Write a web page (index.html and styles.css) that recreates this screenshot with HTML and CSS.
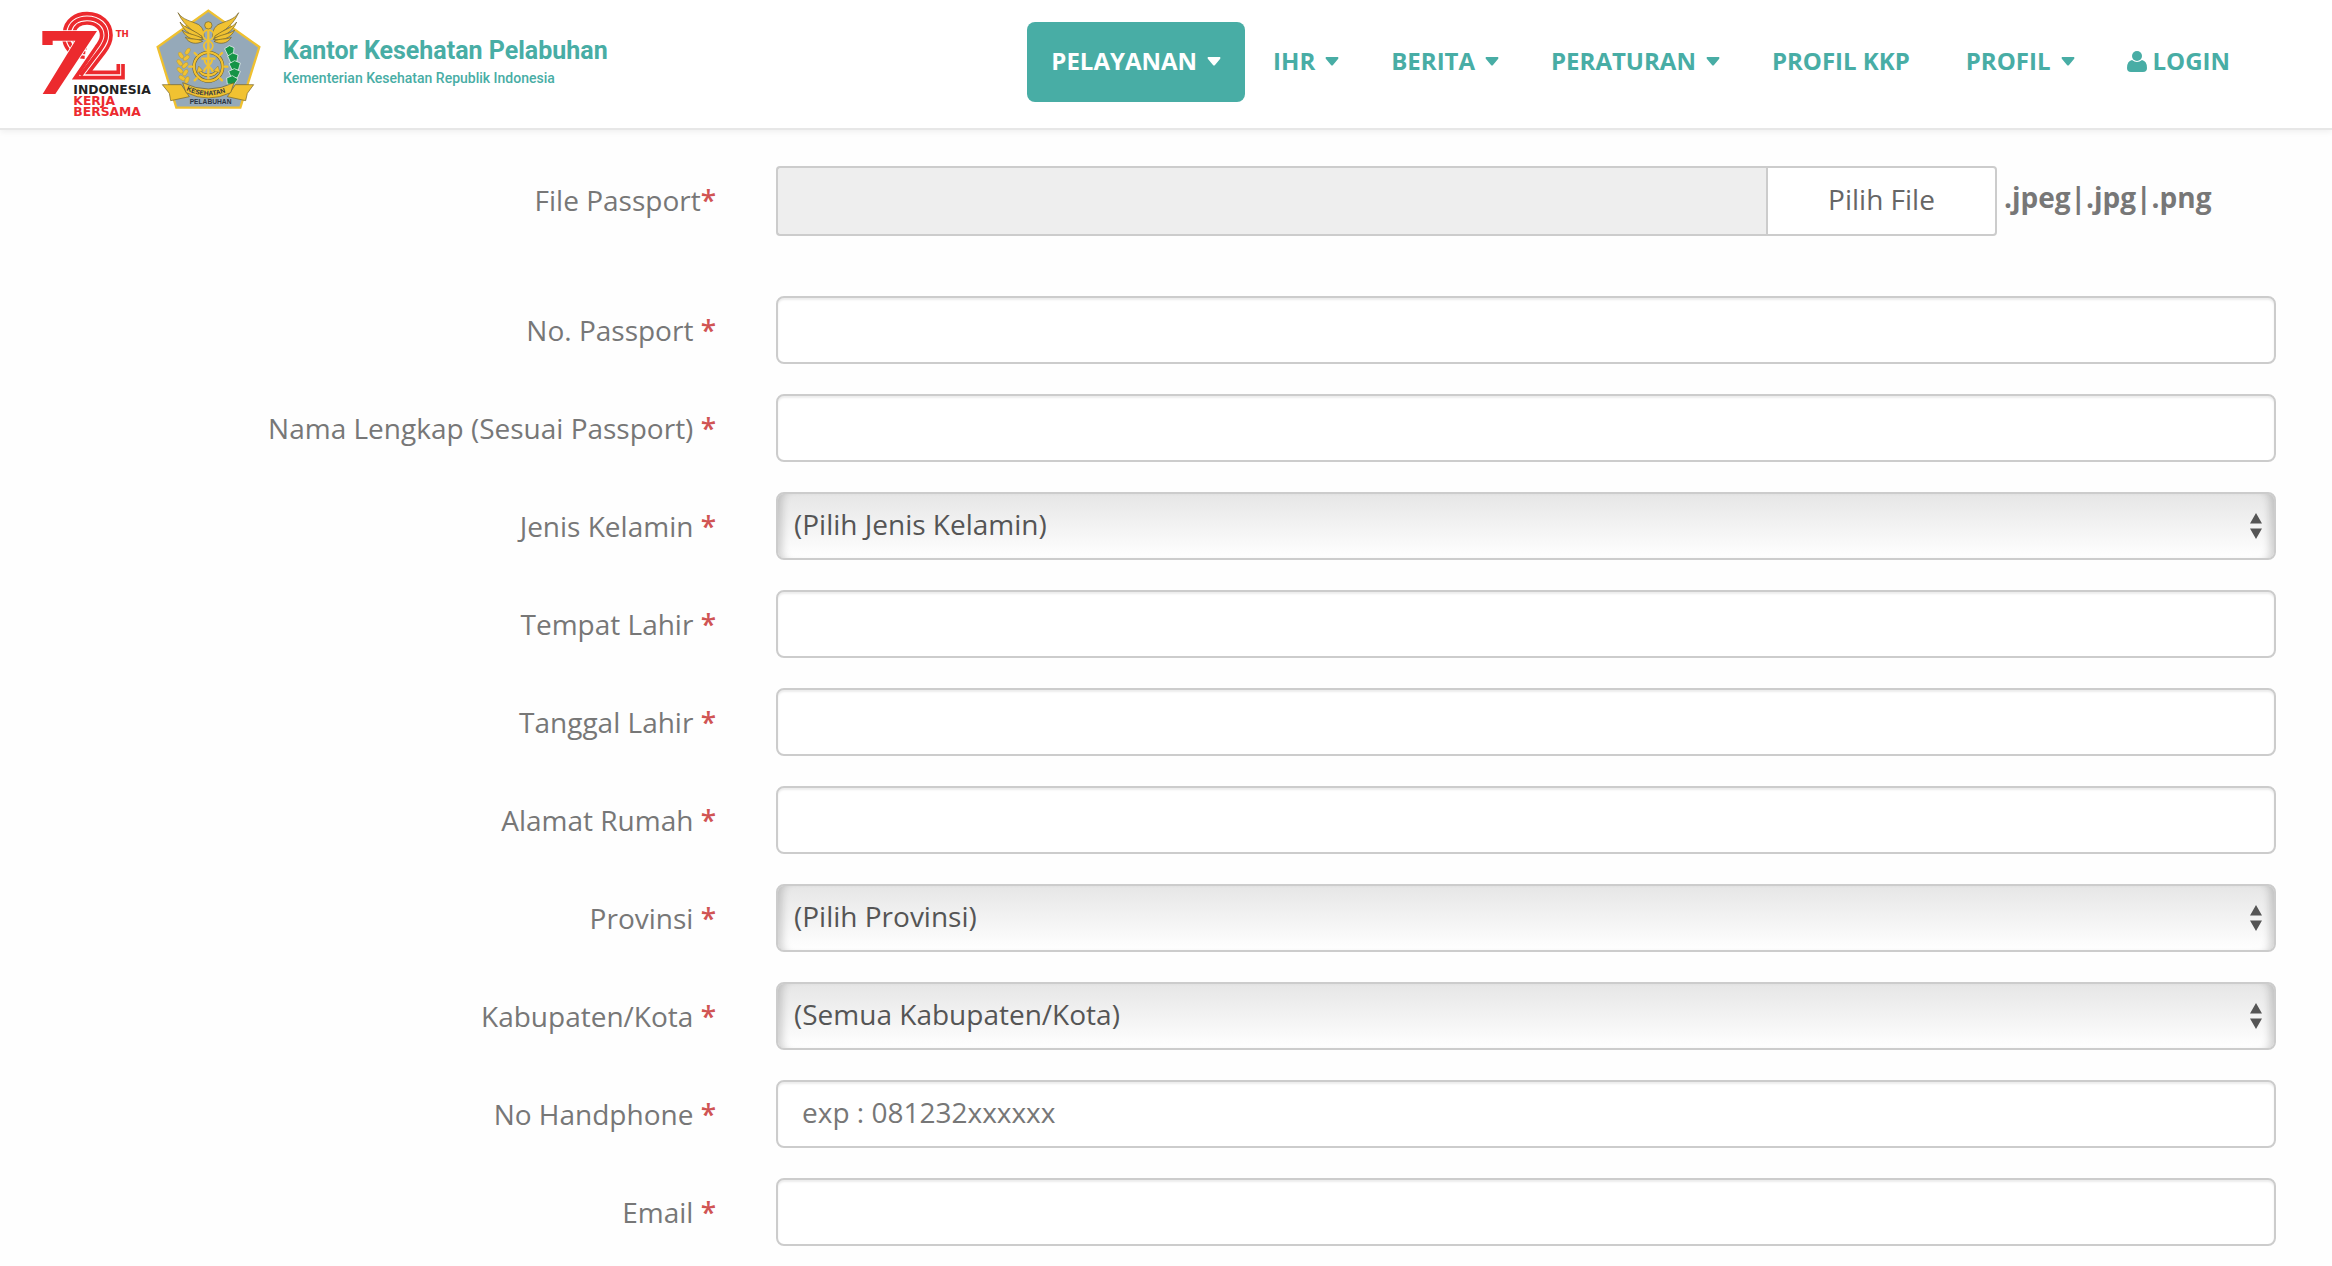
FILE: index.html
```
<!DOCTYPE html>
<html lang="id">
    <head>
        <meta charset="utf-8">
        <title>Kantor Kesehatan Pelabuhan</title>
        <link rel="stylesheet" href="styles.css">
    </head>
    <body>
        <header class="navbar">
            <a class="brand" href="#">
                <svg class="logo-72" viewBox="12 12 342 324">
                    <g fill="none" stroke="#ec2a2e" stroke-width="11">
                        <path d="M86 78 C88 44 118 23 153 23 C196 23 225 50 225 88 C225 110 216 124 205 138 L158 199 H247 V174"/>
                        <path d="M100 78 C103 52 124 37 153 37 C188 37 211 59 211 88 C211 106 202 118 193 130 L134 208"/>
                        <path d="M114 78 C118 60 132 51 153 51 C180 51 197 68 197 88 C197 102 189 113 181 123 L118 215 H261 V174"/>
                        <path d="M84 104 C90 132 112 152 146 154 M98 104 C104 124 120 138 148 140 M112 100 C118 116 128 124 152 126" stroke-width="10"/>
                    </g>
                    <path fill="#ec2a2e" stroke="#fff" stroke-width="5" paint-order="stroke" d="M19 75 H183 L58 264 H20 L118 104 H50 V117 H19 Z"/>
                    <text class="logo-th" x="239" y="93">TH</text>
                    <text class="logo-word dark" x="112" y="264">INDONESIA</text>
                    <text class="logo-word" x="112" y="297">KERJA</text>
                    <text class="logo-word" x="112" y="329">BERSAMA</text>
                </svg>
                <svg class="logo-kkp" viewBox="6 12 324 312">
                    <path d="M169 20 L322 129 L265 311 H73 L17 129 Z" fill="#95a9b9" stroke="#efc02f" stroke-width="7"/>
                    <!-- sayap -->
                    <g id="wing" fill="#f1c232" stroke="#6f5f25" stroke-width="2">
                        <path d="M78 26 C92 48 116 50 140 62 C154 72 156 84 156 100 C138 90 98 72 78 26 Z"/>
                        <path d="M84 54 C98 74 132 78 154 102 C126 98 96 86 84 54 Z"/>
                        <path d="M90 78 C106 92 134 90 154 106 C128 110 102 104 90 78 Z"/>
                        <path d="M100 100 C118 108 134 102 152 112 C134 122 112 120 100 100 Z"/>
                    </g>
                    <use href="#wing" transform="matrix(-1 0 0 1 338 0)"/>
                    <!-- roda kemudi dan jangkar -->
                    <g fill="none" stroke="#6f5f25" stroke-width="10">
                        <circle cx="169" cy="188" r="43"/>
                        <path d="M142 196 C146 220 192 220 196 196"/>
                    </g>
                    <g fill="none" stroke="#f1c232" stroke-width="7">
                        <circle cx="169" cy="188" r="43"/>
                        <path stroke-linecap="round" d="M169 139V130 M204 153l6-6 M218 188h8 M204 223l6 6 M134 153l-6-6 M120 188h-8 M134 223l-6 6"/>
                        <path d="M141 196 C146 220 192 220 197 196 M148 164 H190"/>
                        <path d="M169 76 V226"/>
                        <path d="M169 76 C144 84 150 104 169 110 C190 118 184 136 169 142 M169 76 C194 84 188 104 169 110 C148 118 154 136 169 142" stroke-width="5"/>
                        <path d="M158 168 C158 186 182 188 182 204 M180 168 C180 186 156 188 156 204" stroke-width="6"/>
                    </g>
                    <path fill="#f1c232" stroke="#6f5f25" d="M134 206 L140 186 L153 200 Z M204 206 L198 186 L185 200 Z"/>
                    <circle cx="169" cy="64" r="11" fill="#f1c232" stroke="#6f5f25" stroke-width="2"/>
                    <!-- padi -->
                    <g fill="#f1c232" stroke="#a18a35">
                        <ellipse cx="107" cy="142" rx="6" ry="11" transform="rotate(35 107 142)"/>
                        <ellipse cx="87" cy="154" rx="6" ry="11" transform="rotate(-35 87 154)"/>
                        <ellipse cx="103" cy="162" rx="6" ry="11" transform="rotate(50 103 162)"/>
                        <ellipse cx="83" cy="176" rx="6" ry="11" transform="rotate(-40 83 176)"/>
                        <ellipse cx="99" cy="184" rx="6" ry="11" transform="rotate(45 99 184)"/>
                        <ellipse cx="84" cy="199" rx="6" ry="11" transform="rotate(-45 84 199)"/>
                        <ellipse cx="100" cy="206" rx="6" ry="11" transform="rotate(35 100 206)"/>
                        <ellipse cx="90" cy="222" rx="6" ry="11" transform="rotate(-55 90 222)"/>
                        <ellipse cx="105" cy="228" rx="6" ry="11" transform="rotate(20 105 228)"/>
                    </g>
                    <!-- kapas -->
                    <g fill="#159447" stroke="#fff" stroke-width="2">
                        <path d="M218 134 l14-9 l14 6 l-2 22 l-16 2 Z"/>
                        <path d="M227 156 l15-9 l16 6 l-4 21 l-18 2 Z"/>
                        <path d="M231 179 l17-9 l17 7 l-6 21 l-18 1 Z"/>
                        <path d="M230 202 l17-8 l18 8 l-9 20 l-18-1 Z"/>
                        <path d="M224 222 l17-7 l17 10 l-12 17 l-20-2 Z"/>
                    </g>
                    <!-- pita -->
                    <g fill="#f1c232" stroke="#6f5f25" stroke-width="2">
                        <path d="M31 242 H88 L112 278 L56 290 L52 268 Z"/>
                        <path d="M305 242 H250 L226 278 L281 290 L286 268 Z"/>
                        <path d="M92 236 Q169 274 246 236 L236 266 Q169 298 102 266 Z"/>
                    </g>
                    <path id="pita" fill="none" d="M101 258 Q169 292 242 256"/>
                    <text class="kkp-word"><textPath href="#pita" startOffset="2">KESEHATAN</textPath></text>
                    <text class="kkp-word" x="113" y="300">PELABUHAN</text>
                </svg>
                <span class="brand-text">
                    <strong class="brand-name">Kantor Kesehatan Pelabuhan</strong>
                    <span class="brand-sub">Kementerian Kesehatan Republik Indonesia</span>
                </span>
            </a>
            <nav class="menu">
                <a class="menu-item active" href="#">PELAYANAN <svg class="caret" viewBox="0 0 14 9"><path d="M1 0h12q1 1 0 2l-5 6q-1 1-2 0l-5-6q-1-1 0-2z"/></svg></a>
                <a class="menu-item" href="#">IHR <svg class="caret" viewBox="0 0 14 9"><path d="M1 0h12q1 1 0 2l-5 6q-1 1-2 0l-5-6q-1-1 0-2z"/></svg></a>
                <a class="menu-item" href="#">BERITA <svg class="caret" viewBox="0 0 14 9"><path d="M1 0h12q1 1 0 2l-5 6q-1 1-2 0l-5-6q-1-1 0-2z"/></svg></a>
                <a class="menu-item" href="#">PERATURAN <svg class="caret" viewBox="0 0 14 9"><path d="M1 0h12q1 1 0 2l-5 6q-1 1-2 0l-5-6q-1-1 0-2z"/></svg></a>
                <a class="menu-item plain" href="#">PROFIL KKP</a>
                <a class="menu-item" href="#">PROFIL <svg class="caret" viewBox="0 0 14 9"><path d="M1 0h12q1 1 0 2l-5 6q-1 1-2 0l-5-6q-1-1 0-2z"/></svg></a>
                <a class="menu-item login" href="#"><svg class="user" viewBox="0 0 20 21"><ellipse cx="10" cy="5" rx="5" ry="5"/><path d="M5 9q5 4 10 0q5 1 5 8q0 4-4 4H4q-4 0-4-4q0-7 5-8z"/></svg>LOGIN</a>
            </nav>
        </header>
        <form class="form">
            <div class="row row-file">
                <label for="file">File Passport<span class="req">*</span></label>
                <div class="file">
                    <input class="file-name" type="text" id="file" readonly>
                    <button class="file-btn" type="button">Pilih File</button>
                    <b class="file-ext">.jpeg|.jpg|.png</b>
                </div>
            </div>
            <div class="row">
                <label for="passport">No. Passport <span class="req">*</span></label>
                <input class="control" type="text" id="passport">
            </div>
            <div class="row">
                <label for="nama">Nama Lengkap (Sesuai Passport) <span class="req">*</span></label>
                <input class="control" type="text" id="nama">
            </div>
            <div class="row">
                <label for="kelamin">Jenis Kelamin <span class="req">*</span></label>
                <select class="control select" id="kelamin"><option>(Pilih Jenis Kelamin)</option></select>
            </div>
            <div class="row">
                <label for="tempat">Tempat Lahir <span class="req">*</span></label>
                <input class="control" type="text" id="tempat">
            </div>
            <div class="row">
                <label for="tanggal">Tanggal Lahir <span class="req">*</span></label>
                <input class="control" type="text" id="tanggal">
            </div>
            <div class="row">
                <label for="alamat">Alamat Rumah <span class="req">*</span></label>
                <input class="control" type="text" id="alamat">
            </div>
            <div class="row">
                <label for="provinsi">Provinsi <span class="req">*</span></label>
                <select class="control select" id="provinsi"><option>(Pilih Provinsi)</option></select>
            </div>
            <div class="row">
                <label for="kota">Kabupaten/Kota <span class="req">*</span></label>
                <select class="control select" id="kota"><option>(Semua Kabupaten/Kota)</option></select>
            </div>
            <div class="row">
                <label for="hp">No Handphone <span class="req">*</span></label>
                <input class="control" type="tel" id="hp" placeholder="exp : 081232xxxxxx">
            </div>
            <div class="row">
                <label for="email">Email <span class="req">*</span></label>
                <input class="control" type="email" id="email">
            </div>
        </form>
    </body>
</html>
```

FILE: styles.css
```
* {
    box-sizing: border-box;
}
body {
    margin: 0;
    background-color: #fefefe;
    color: #777;
    font-family: "Open Sans", sans-serif;
    font-size: 28px;
    line-height: 40px;
}
a {
    color: #48ada5;
    text-decoration: none;
}
.navbar {
    display: flex;
    justify-content: space-between;
    align-items: flex-start;
    height: 130px;
    padding: 0 78px 0 40px;
    background-color: #fff;
    border-bottom: 2px solid #e7e7e7;
    box-shadow: 0 2px 6px rgba(0, 0, 0, 0.06);
}
.brand {
    display: flex;
    padding-top: 8px;
}
.logo-72 {
    width: 114px;
    height: 108px;
    margin-top: 2px;
}
.logo-kkp {
    width: 108px;
    height: 104px;
}
.logo-th {
    font: bold 26px "DejaVu Sans", sans-serif;
    fill: #ec2a2e;
}
.logo-word {
    font: bold 37px "DejaVu Sans", sans-serif;
    fill: #ec2a2e;
}
.dark {
    fill: #222;
}
.kkp-word {
    font: bold 20px "Liberation Sans", sans-serif;
    fill: #2b3440;
}
.brand-text {
    display: flex;
    flex-direction: column;
    padding: 27px 0 0 21px;
    font-family: Roboto, sans-serif;
    white-space: nowrap;
}
.brand-name {
    font-size: 25px;
    line-height: 32px;
}
.brand-sub {
    font-size: 14px;
    font-weight: 500;
    line-height: 22px;
}
.menu {
    display: flex;
    gap: 4px;
    padding-top: 22px;
}
.menu-item {
    display: flex;
    align-items: center;
    gap: 10px;
    height: 80px;
    padding: 0 24px 2px;
    border-radius: 8px;
    font-size: 24px;
    font-weight: 700;
    white-space: nowrap;
}
.menu-item svg {
    fill: currentColor;
}
.active {
    background-color: #48ada5;
    color: #fff;
}
.plain {
    padding-right: 28px;
}
.login {
    gap: 6px;
}
.caret {
    width: 14px;
    height: 9px;
}
.user {
    width: 20px;
    height: 21px;
}
.form {
    display: flex;
    flex-direction: column;
    gap: 30px;
    padding: 36px 56px 16px;
}
.row {
    display: grid;
    grid-template-columns: 11fr 25fr;
    gap: 60px;
}
.row-file {
    margin-bottom: 30px;
}
.row label {
    padding-top: 14px;
    text-align: right;
}
.req {
    color: #d05454;
    font-weight: 600;
}
.control {
    width: 100%;
    height: 68px;
    padding: 0 24px 4px;
    border: 2px solid #ccc;
    border-radius: 8px;
    background-color: #fff;
    box-shadow: inset 0 2px 2px rgba(0, 0, 0, 0.08);
    color: #555;
    font: inherit;
}
.control::placeholder {
    color: #777;
}
.select {
    appearance: none;
    padding: 0 16px 4px;
    background: url("data:image/svg+xml,%3Csvg xmlns='http://www.w3.org/2000/svg' viewBox='0 0 12 26'%3E%3Cpath fill='%23555' d='M0 10.500L6 0l6 10.500zM0 15.500h12L6 26z'/%3E%3C/svg%3E") right 12px center / 12px 26px no-repeat, linear-gradient(#e6e6e6, #fff);
    box-shadow: inset 10px 0 8px -6px rgba(0, 0, 0, 0.18), inset -10px 0 8px -6px rgba(0, 0, 0, 0.18);
}
.file {
    display: flex;
}
.file-name {
    flex: 1;
    min-width: 0;
    height: 70px;
    border: 2px solid #ccc;
    border-right: 0;
    border-radius: 4px 0 0 4px;
    background-color: #eee;
    font: inherit;
}
.file-btn {
    width: 231px;
    height: 70px;
    padding-bottom: 5px;
    border: 2px solid #ccc;
    border-radius: 0 4px 4px 0;
    background-color: #fff;
    color: #666;
    font: inherit;
}
.file-ext {
    width: 279px;
    padding: 11px 0 0 7px;
}
```
